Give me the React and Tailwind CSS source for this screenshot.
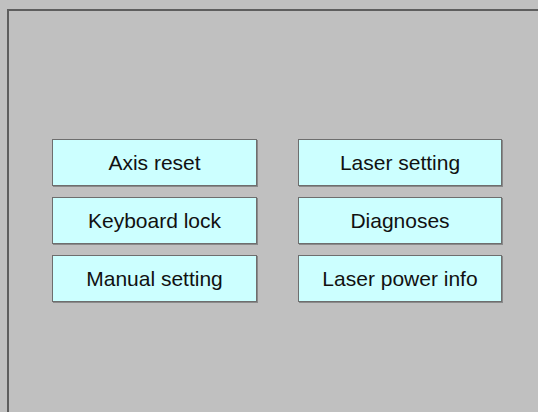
export default function App() {
  const buttons = [
    "Axis reset",
    "Laser setting",
    "Keyboard lock",
    "Diagnoses",
    "Manual setting",
    "Laser power info",
  ];

  return (
    <div className="w-[538px] h-[412px] bg-[#c0c0c0] pt-[9px] pl-[7px] flex overflow-hidden font-['Liberation_Sans',Arial,sans-serif]">
      <div className="flex-1 border-t-2 border-l-2 border-[#5e5e5e] pt-[128px] pl-[43px]">
        <div className="grid grid-cols-[205px_204px] gap-x-[41px] gap-y-[11px]">
          {buttons.map((label) => (
            <button
              key={label}
              className="h-[47px] bg-[#ccffff] border border-[#6e6e6e] shadow-[1px_1px_0_#8a8a8a] text-[21px] text-[#111] flex items-center justify-center"
            >
              {label}
            </button>
          ))}
        </div>
      </div>
    </div>
  );
}
